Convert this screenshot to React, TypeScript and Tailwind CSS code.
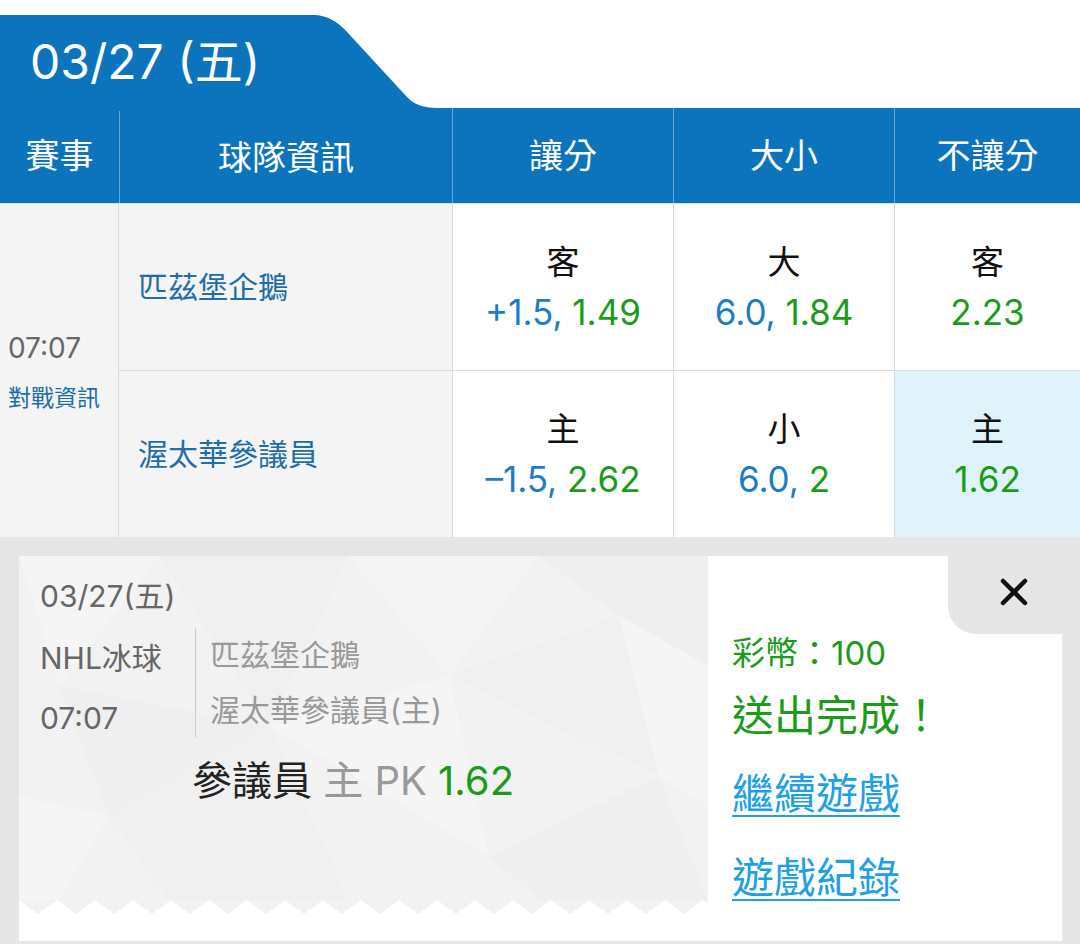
import React from "react";

const BLUE = "bg-[#0b74bd]";

type Odd = { label: string; line?: string; price: string; picked?: boolean };

const rows: { team: string; odds: Odd[] }[] = [
  {
    team: "匹茲堡企鵝",
    odds: [
      { label: "客", line: "+1.5", price: "1.49" },
      { label: "大", line: "6.0", price: "1.84" },
      { label: "客", price: "2.23" },
    ],
  },
  {
    team: "渥太華參議員",
    odds: [
      { label: "主", line: "–1.5", price: "2.62" },
      { label: "小", line: "6.0", price: "2" },
      { label: "主", price: "1.62", picked: true },
    ],
  },
];

function OddCell({ o, top }: { o: Odd; top: boolean }) {
  return (
    <div
      className={[
        "flex flex-col items-center justify-center border-l border-[#cfdce7]",
        top ? "border-b border-b-[#dcdcdc]" : "",
        o.picked ? "bg-[#e0f3fb]" : "bg-white",
      ].join(" ")}
    >
      <div className="text-[33px] leading-[50px] text-[#111]">{o.label}</div>
      <div className="text-[35px] leading-[50px]">
        {o.line && <span className="text-[#1b7dc6]">{o.line}, </span>}
        <span className="text-[#1a9c1a]">{o.price}</span>
      </div>
    </div>
  );
}

function TicketBg() {
  // faint low-poly background of the ticket
  return (
    <svg className="absolute inset-0" width="689" height="344" viewBox="0 0 689 344">
      <rect width="689" height="344" fill="#f2f2f2" />
      <polygon points="0,0 140,0 40,130" fill="#f5f5f5" />
      <polygon points="140,0 330,0 250,170" fill="#f0f0f0" />
      <polygon points="330,0 520,0 430,120" fill="#f4f4f4" />
      <polygon points="520,0 689,0 689,110 600,60" fill="#efefef" />
      <polygon points="600,60 689,110 689,250 640,220" fill="#f5f5f5" />
      <polygon points="40,130 250,170 90,260" fill="#efefef" />
      <polygon points="250,170 430,120 470,300" fill="#f5f5f5" />
      <polygon points="0,240 90,260 40,344 0,344" fill="#f5f5f5" />
      <polygon points="90,260 250,170 330,344 150,344" fill="#f0f0f0" />
      <polygon points="470,300 640,220 689,344 520,344" fill="#efefef" />
      <polygon points="430,120 600,60 640,220" fill="#f0f0f0" />
    </svg>
  );
}

function Teeth() {
  const n = 19;
  const pts: string[] = ["0,0"];
  for (let i = 0; i < n; i++) {
    const x = i * 38;
    pts.push(`${x + 19},14`, `${x + 38},0`);
  }
  pts.push("689,0");
  return (
    <svg width="689" height="14" viewBox="0 0 689 14" className="block">
      <polygon points={pts.join(" ")} fill="#f2f2f2" />
    </svg>
  );
}

export default function App() {
  return (
    <div className="w-[1080px] h-[944px] overflow-hidden bg-white font-[Inter,'Noto_Sans_CJK_TC',sans-serif]">
      <div className="h-[15px]" />

      {/* date tab */}
      <div className="flex h-[93px]">
        <div className={`w-[300px] ${BLUE} flex items-center pl-[30px] text-[48px] text-white`}>
          03/27 (五)
        </div>
        <svg width="160" height="93" viewBox="0 0 160 93" className="block">
          <path d="M0,0 H14 Q32,0 48,18 L107,82 Q117,93 137,93 H160 V93 H0 Z" fill="#0b74bd" />
        </svg>
      </div>

      {/* header row */}
      <div className={`grid grid-cols-[119px_333px_221px_221px_186px] h-[95px] ${BLUE} text-[34px] text-white`}>
        <div className="flex items-center justify-center">賽事</div>
        <div className="flex items-center justify-center border-l border-[#6aa6d6] mt-[3px]">球隊資訊</div>
        <div className="flex items-center justify-center border-l border-[#6aa6d6]">讓分</div>
        <div className="flex items-center justify-center border-l border-[#6aa6d6]">大小</div>
        <div className="flex items-center justify-center border-l border-[#6aa6d6]">不讓分</div>
      </div>

      {/* match rows */}
      <div className="grid grid-cols-[119px_333px_221px_221px_186px] grid-rows-[167px_166px] border-t border-[#cfe1f0]">
        <div className="row-span-2 flex flex-col justify-center pl-[8px] bg-[#f4f4f4] border-r border-[#dcdcdc]">
          <div className="text-[28px] leading-[40px] text-[#666]">07:07</div>
          <div className="mt-[15px] text-[23px] leading-[30px] text-[#1d6ea9]">對戰資訊</div>
        </div>
        {rows.map((r, i) => (
          <React.Fragment key={r.team}>
            <div
              className={[
                "flex items-center pl-[19px] bg-[#f4f4f4] text-[30px] text-[#1d6ea9]",
                i === 0 ? "border-b border-[#dcdcdc]" : "",
              ].join(" ")}
            >
              {r.team}
            </div>
            {r.odds.map((o, j) => (
              <OddCell key={j} o={o} top={i === 0} />
            ))}
          </React.Fragment>
        ))}
      </div>

      {/* bet slip */}
      <div className="h-[408px] bg-[#e6e6e6] pt-[19px] pl-[19px] pr-[18px]">
        <div className="relative flex h-[385px] bg-white">
          <div className="flex w-[689px] flex-col">
            <div className="relative h-[344px]">
              <TicketBg />
              <div className="relative pl-[21px] pt-[20px]">
                <div className="text-[30px] leading-[40px] text-[#666]">03/27(五)</div>
                <div className="mt-[12px] flex">
                  <div className="w-[155px] text-[30px] leading-[60px] text-[#666]">
                    <div>NHL冰球</div>
                    <div>07:07</div>
                  </div>
                  <div className="h-[110px] border-l border-[#cccccc] pl-[14px] text-[30px] leading-[55px] text-[#999]">
                    <div>匹茲堡企鵝</div>
                    <div>渥太華參議員(主)</div>
                  </div>
                </div>
              </div>
              <div className="relative mt-[8px] pr-[21px] text-center text-[40px] leading-[50px]">
                <span className="text-[#222]">參議員</span>
                <span className="text-[#999]"> 主 PK </span>
                <span className="text-[#1a9c1a]">1.62</span>
              </div>
            </div>
            <Teeth />
          </div>

          <div className="flex-1 pl-[24px] pt-[75px]">
            <div className="text-[33px] leading-[44px] text-[#1a9c1a]">彩幣：100</div>
            <div className="mt-[13px] text-[42px] leading-[56px] text-[#1a9c1a]">送出完成！</div>
            <div className="mt-[22px] text-[42px] leading-[56px] text-[#1ea0e6] underline decoration-2 underline-offset-[6px]">
              繼續遊戲
            </div>
            <div className="mt-[28px] text-[42px] leading-[56px] text-[#1ea0e6] underline decoration-2 underline-offset-[6px]">
              遊戲紀錄
            </div>
          </div>

          {/* close corner */}
          <div className="absolute right-0 top-0 h-[78px] w-[114px] rounded-bl-[28px] bg-[#e6e6e6] pl-[52px] pt-[22px]">
            <svg width="28" height="28" viewBox="0 0 28 28">
              <path d="M3 3 L25 25 M25 3 L3 25" stroke="#111" strokeWidth="4.5" strokeLinecap="round" />
            </svg>
          </div>
        </div>
      </div>
    </div>
  );
}
